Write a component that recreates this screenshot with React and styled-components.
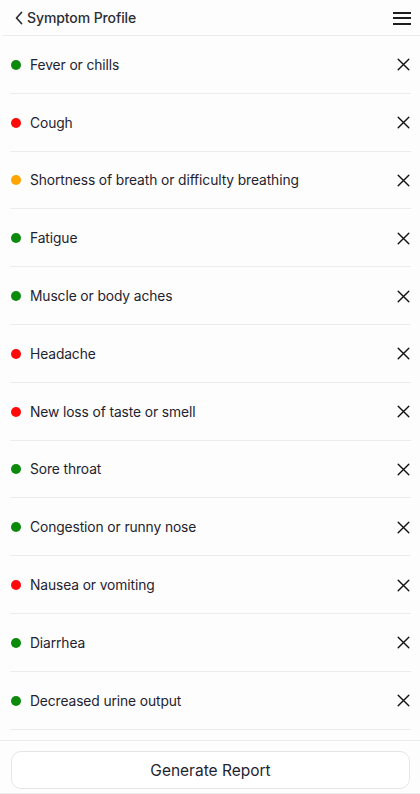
import React from "react";
import styled, { createGlobalStyle } from "styled-components";

const GlobalStyle = createGlobalStyle`
  html, body {
    margin: 0;
    padding: 0;
    background: #fdfdfd;
  }
  body {
    font-family: Inter, "Noto Sans", "Liberation Sans", sans-serif;
    -webkit-font-smoothing: antialiased;
  }
`;

const Page = styled.div`
  height: 794px;
  display: flex;
  flex-direction: column;
  background: #fdfdfd;
  overflow: hidden;
`;

const Header = styled.header`
  height: 35px;
  flex-shrink: 0;
  margin-left: 3px;
  display: flex;
  align-items: center;
  justify-content: space-between;
  padding: 0 9px 0 11px;
  border-bottom: 1px solid #ececec;
`;

const Back = styled.div`
  display: flex;
  align-items: center;
  gap: 3px;
  color: #2b2d33;
`;

const Title = styled.h1`
  margin: 0;
  font-size: 14px;
  font-weight: 500;
  color: #2b2d33;
  letter-spacing: -0.1px;
`;

const Menu = styled.div`
  width: 18px;
  display: flex;
  flex-direction: column;
  gap: 3.5px;
  margin-top: 1px;

  span {
    display: block;
    height: 2px;
    background: #1e1e1e;
  }
`;

const List = styled.ul`
  list-style: none;
  margin: 0;
  padding: 0 9px 0 10px;
  flex: 1;
  overflow: hidden;
`;

const Row = styled.li`
  box-sizing: border-box;
  height: 57.8px;
  display: flex;
  align-items: center;
  border-bottom: 1px solid #ececec;
  padding: 1px 1px 0 1px;
`;

const Dot = styled.span`
  width: 10px;
  height: 10px;
  border-radius: 50%;
  background: ${(p) => p.color};
  flex-shrink: 0;
  margin-right: 9px;
`;

const Label = styled.span`
  flex: 1;
  font-size: 13.8px;
  color: #1f2330;
  letter-spacing: -0.1px;
`;

const Remove = styled.button`
  border: none;
  background: none;
  padding: 0;
  display: flex;
  color: #111;
  cursor: pointer;
`;

const Footer = styled.footer`
  flex-shrink: 0;
  border-top: 1px solid #ececec;
  border-bottom: 1px solid #ececec;
  padding: 10px 10px 4px 11px;
  background: #fdfdfd;
`;

const Button = styled.button`
  width: 100%;
  height: 38px;
  border: 1px solid #e6e6e6;
  border-radius: 10px;
  background: #fff;
  font-family: inherit;
  font-size: 15.5px;
  color: #1f2330;
  cursor: pointer;
`;

const GREEN = "#0b8a0b";
const RED = "#ff0a0a";
const ORANGE = "#ffa400";

const symptoms = [
  ["Fever or chills", GREEN],
  ["Cough", RED],
  ["Shortness of breath or difficulty breathing", ORANGE],
  ["Fatigue", GREEN],
  ["Muscle or body aches", GREEN],
  ["Headache", RED],
  ["New loss of taste or smell", RED],
  ["Sore throat", GREEN],
  ["Congestion or runny nose", GREEN],
  ["Nausea or vomiting", RED],
  ["Diarrhea", GREEN],
  ["Decreased urine output", GREEN],
];

const Chevron = () => (
  <svg width="10" height="14" viewBox="0 0 10 14" fill="none">
    <path d="M7.5 1.5L2.5 7l5 5.5" stroke="currentColor" strokeWidth="1.7" strokeLinecap="round" strokeLinejoin="round" />
  </svg>
);

const Cross = () => (
  <svg width="13" height="13" viewBox="0 0 13 13" fill="none">
    <path d="M1.2 1.2l10.6 10.6M11.8 1.2L1.2 11.8" stroke="currentColor" strokeWidth="1.4" strokeLinecap="round" />
  </svg>
);

export default function App() {
  return (
    <>
      <GlobalStyle />
      <Page>
        <Header>
          <Back>
            <Chevron />
            <Title>Symptom Profile</Title>
          </Back>
          <Menu>
            <span />
            <span />
            <span />
          </Menu>
        </Header>
        <List>
          {symptoms.map(([name, color]) => (
            <Row key={name}>
              <Dot color={color} />
              <Label>{name}</Label>
              <Remove aria-label={`Remove ${name}`}>
                <Cross />
              </Remove>
            </Row>
          ))}
        </List>
        <Footer>
          <Button>Generate Report</Button>
        </Footer>
      </Page>
    </>
  );
}
